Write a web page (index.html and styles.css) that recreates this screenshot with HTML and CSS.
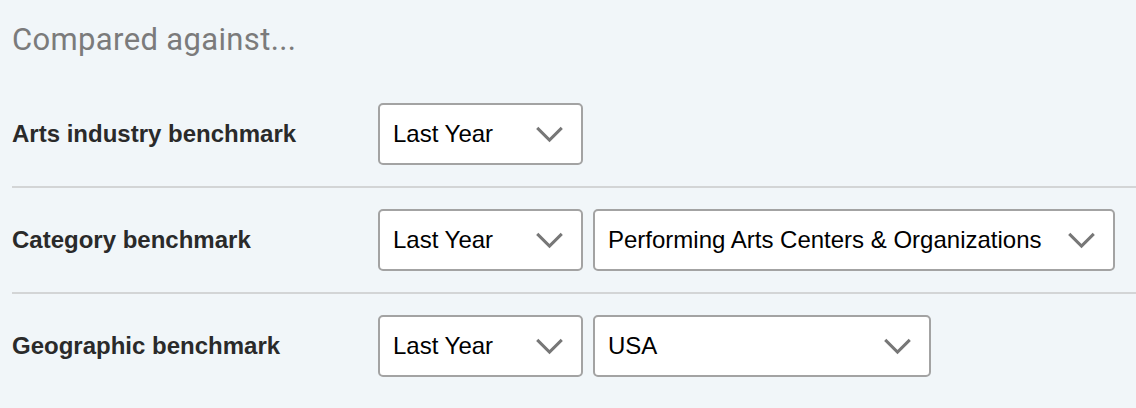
FILE: index.html
```html
<!DOCTYPE html>
<html>
<head>
<meta charset="utf-8">
<link rel="stylesheet" href="styles.css">
</head>
<body>
<div class="panel">
  <h2 class="title">Compared against...</h2>
  <div class="row">
    <div class="label">Arts industry benchmark</div>
    <div class="controls">
      <div class="select w-period"><span>Last Year</span><svg class="chev" viewBox="0 0 30 18"><path d="M2 2 L15 15 L28 2"/></svg></div>
    </div>
  </div>
  <div class="row">
    <div class="label">Category benchmark</div>
    <div class="controls">
      <div class="select w-period"><span>Last Year</span><svg class="chev" viewBox="0 0 30 18"><path d="M2 2 L15 15 L28 2"/></svg></div>
      <div class="select w-cat"><span>Performing Arts Centers &amp; Organizations</span><svg class="chev" viewBox="0 0 30 18"><path d="M2 2 L15 15 L28 2"/></svg></div>
    </div>
  </div>
  <div class="row last">
    <div class="label">Geographic benchmark</div>
    <div class="controls">
      <div class="select w-period"><span>Last Year</span><svg class="chev" viewBox="0 0 30 18"><path d="M2 2 L15 15 L28 2"/></svg></div>
      <div class="select w-geo"><span>USA</span><svg class="chev" viewBox="0 0 30 18"><path d="M2 2 L15 15 L28 2"/></svg></div>
    </div>
  </div>
</div>
</body>
</html>
```

FILE: styles.css
```css
html, body {
  margin: 0;
  padding: 0;
  background: #f1f6f9;
}
.panel {
  padding-left: 12px;
  font-family: "Liberation Sans", Arial, sans-serif;
}
.title {
  margin: 0;
  height: 82px;
  padding-top: 20px;
  box-sizing: border-box;
  font-family: Roboto, "DejaVu Sans Condensed", sans-serif;
  font-weight: 400;
  font-size: 31px;
  line-height: 40px;
  color: #7b7b7b;
  letter-spacing: 0.35px;
}
.row {
  display: flex;
  align-items: center;
  padding: 21px 0;
  border-bottom: 2px solid #d3d5d6;
}
.row.last {
  border-bottom: none;
}
.label {
  width: 366px;
  flex: none;
  font-weight: 700;
  font-size: 24px;
  color: #2a2a2a;
}
.controls {
  display: flex;
  gap: 10px;
}
.select {
  box-sizing: border-box;
  height: 62px;
  display: flex;
  align-items: center;
  justify-content: space-between;
  padding: 0 17px 0 13px;
  background: #fff;
  border: 2px solid #a3a3a3;
  border-radius: 5px;
  font-size: 24px;
  color: #000;
}
.w-period { width: 205px; }
.w-cat { width: 522px; }
.w-geo { width: 338px; }
.chev {
  width: 29px;
  height: 17px;
  flex: none;
}
.chev path {
  fill: none;
  stroke: #777;
  stroke-width: 3.2;
}
```
